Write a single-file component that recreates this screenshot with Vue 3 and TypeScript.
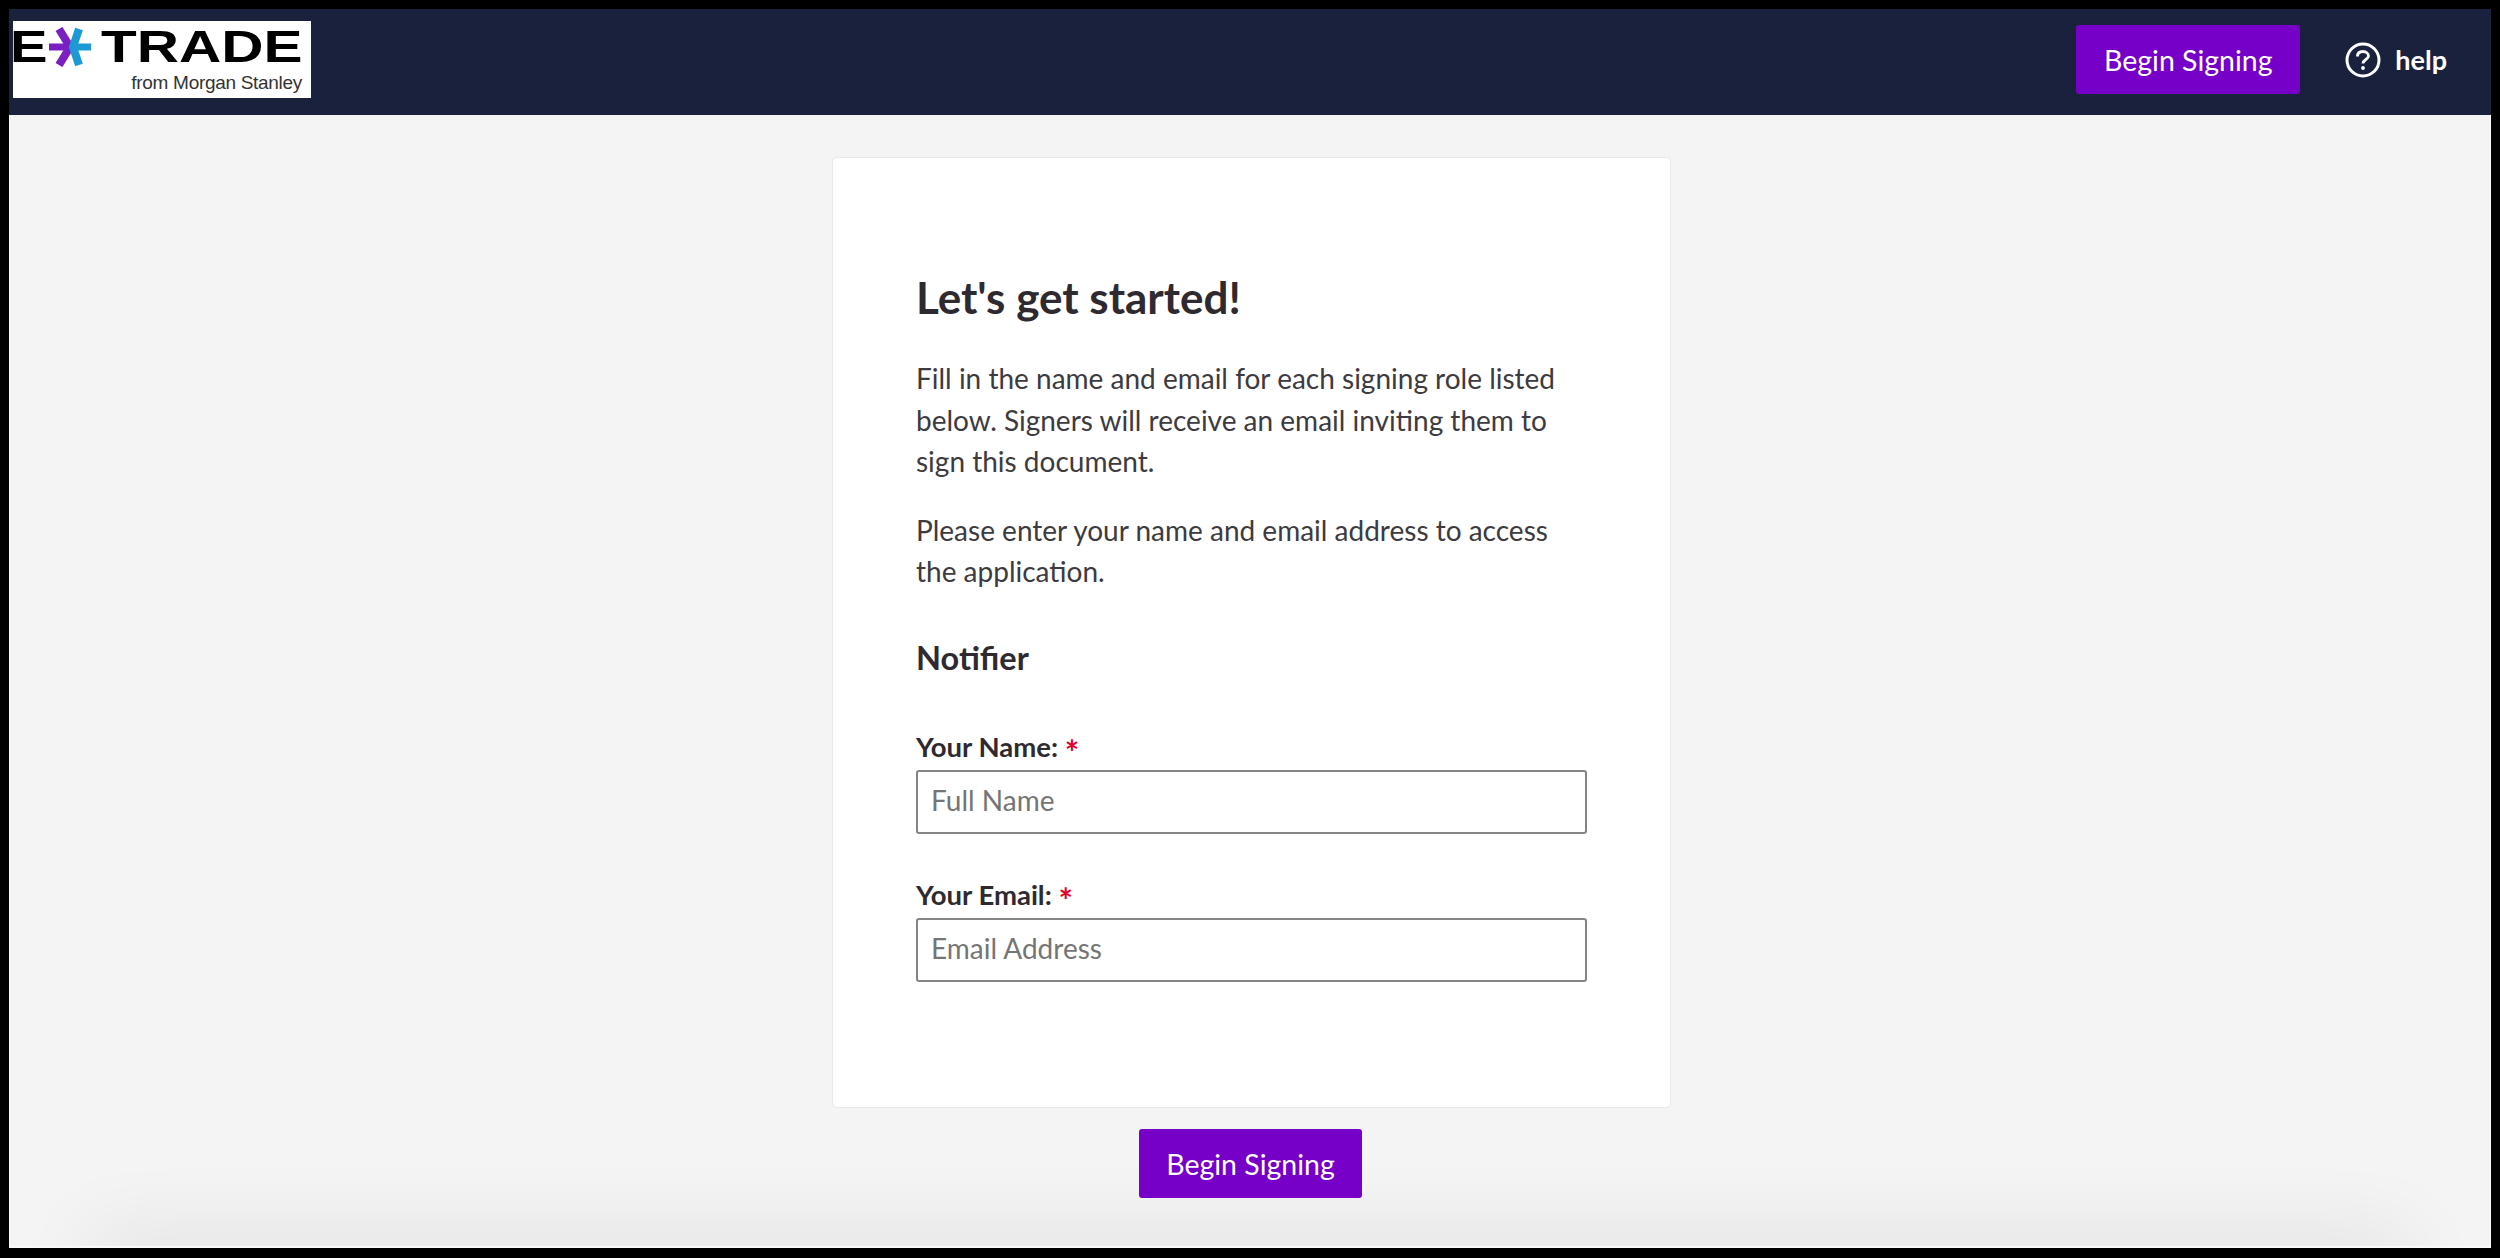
<template>
  <div class="frame">
    <div class="screen">
      <header class="topbar">
        <div class="logo">
          <div class="logo__mark">
            <span class="logo__e">E</span>
            <svg class="logo__star" viewBox="0 0 44 40" width="44" height="40" aria-hidden="true">
              <path d="M11 2 L22 20 L11 38" fill="none" stroke="#7a1fc2" stroke-width="8" />
              <path d="M1 20 H22" fill="none" stroke="#7a1fc2" stroke-width="7" />
              <path d="M31 2 L25 20 L31 38" fill="none" stroke="#1d9ad6" stroke-width="8" />
              <path d="M25 20 H43" fill="none" stroke="#1d9ad6" stroke-width="7" />
            </svg>
            <span class="logo__trade">TRADE</span>
          </div>
          <div class="logo__sub">from Morgan Stanley</div>
        </div>
        <div class="topbar__actions">
          <button type="button" class="btn">Begin Signing</button>
          <a class="help">
            <svg viewBox="0 0 36 36" width="36" height="36" aria-hidden="true">
              <circle cx="18" cy="18" r="16" fill="none" stroke="#fff" stroke-width="3" />
              <path d="M12.5 14.5 C12.5 11 15 9.5 18 9.5 C21 9.5 23.5 11.3 23.5 14 C23.5 17.5 18 17.5 18 21.5" fill="none" stroke="#fff" stroke-width="2.8" />
              <circle cx="18" cy="26" r="1.9" fill="#fff" />
            </svg>
            <span>help</span>
          </a>
        </div>
      </header>

      <main class="content">
        <form class="card" @submit.prevent>
          <h1 class="card__title">Let's get started!</h1>
          <p class="card__text">
            Fill in the name and email for each signing role listed below. Signers will receive an email inviting them to sign this document.
          </p>
          <p class="card__text">Please enter your name and email address to access the application.</p>
          <h2 class="card__role">Notifier</h2>
          <div v-for="field in fields" :key="field.id" class="field">
            <label class="field__label" :for="field.id">{{ field.label }} <span class="field__req">*</span></label>
            <input :id="field.id" class="field__input" type="text" :placeholder="field.placeholder" />
          </div>
        </form>
        <button type="button" class="btn btn--bottom">Begin Signing</button>
      </main>
    </div>
  </div>
</template>

<script setup lang="ts">
const fields = [
  { id: 'name', label: 'Your Name:', placeholder: 'Full Name' },
  { id: 'email', label: 'Your Email:', placeholder: 'Email Address' },
]
</script>

<style>
html,
body {
  margin: 0;
  background: #000;
}
</style>

<style scoped>
.frame {
  box-sizing: border-box;
  height: 1258px;
  padding: 9px 9px 10px 9px;
  background: #000;
  font-family: Lato, "Open Sans", sans-serif;
}

.screen {
  display: flex;
  flex-direction: column;
  height: 100%;
}

.topbar {
  flex: none;
  box-sizing: border-box;
  height: 106px;
  padding: 12px 44px 0 4px;
  display: flex;
  justify-content: space-between;
  align-items: flex-start;
  background: #1a213d;
}

.logo {
  box-sizing: border-box;
  width: 298px;
  height: 77px;
  background: #fff;
  color: #000;
}

.logo__mark {
  display: flex;
  align-items: center;
  height: 46px;
  margin-top: 3px;
  font-family: "Liberation Sans", Arial, sans-serif;
  font-weight: 700;
  font-size: 45px;
  line-height: 46px;
}

.logo__e {
  width: 37px;
  margin-left: -3px;
  transform: scaleX(1.25);
  transform-origin: left center;
}

.logo__star {
  flex: none;
  margin-left: 1px;
}

.logo__trade {
  margin-left: 9px;
  transform: scaleX(1.3);
  transform-origin: left center;
}

.logo__sub {
  padding-right: 9px;
  margin-top: 2px;
  text-align: right;
  font-family: "Liberation Sans", Arial, sans-serif;
  font-size: 19px;
  line-height: 22px;
  letter-spacing: -0.3px;
  color: #333;
}

.topbar__actions {
  display: flex;
  align-items: center;
  gap: 45px;
  margin-top: 4px;
}

.btn {
  position: relative;
  z-index: 1;
  box-sizing: border-box;
  width: 224px;
  height: 69px;
  padding: 0;
  border: none;
  border-radius: 3px;
  background: #7600c8;
  color: #fff;
  font-family: Lato, "Open Sans", sans-serif;
  font-size: 28.5px;
  cursor: pointer;
}

.btn--bottom {
  width: 223px;
  margin-left: 1px;
}

.help {
  display: flex;
  align-items: center;
  gap: 14px;
  color: #fff;
  font-size: 27px;
  font-weight: 700;
}

.content {
  position: relative;
  overflow: hidden;
  flex: 1;
  display: flex;
  flex-direction: column;
  align-items: center;
  padding-top: 42px;
  border: solid #fafafa;
  border-width: 0 1px 2px;
  background: #f4f4f4;
}

/* soft shadow rising from the bottom edge */
.content::after {
  content: '';
  position: absolute;
  left: 80px;
  right: 80px;
  bottom: -20px;
  height: 20px;
  box-shadow: 0 0 80px rgba(0, 0, 0, 0.2);
  pointer-events: none;
}

.card {
  box-sizing: border-box;
  width: 839px;
  height: 951px;
  margin: 0 0 21px 3px;
  padding: 113px 83px 0;
  border: 1px solid #e8e8e8;
  border-radius: 5px;
  background: #fff;
  color: #2e2a30;
}

.card__title {
  margin: 0 0 35px;
  font-size: 44px;
  line-height: 52px;
  font-weight: 700;
}

.card__text {
  margin: 0 0 27px;
  font-size: 28px;
  line-height: 41.5px;
  color: #3d3a40;
}

.card__role {
  margin: 45px 0 49px;
  font-size: 32.5px;
  line-height: 40px;
  font-weight: 700;
}

.field {
  margin-bottom: 41px;
}

.field__label {
  display: block;
  height: 43px;
  font-size: 27.5px;
  line-height: 40px;
  font-weight: 700;
}

.field__req {
  color: #e4002b;
  font-size: 34px;
  line-height: 30px;
  vertical-align: -8px;
}

.field__input {
  display: block;
  box-sizing: border-box;
  width: 671px;
  height: 64px;
  padding: 0 13px 3px;
  border: 2px solid #858585;
  border-radius: 3px;
  background: #fff;
  font-family: Lato, "Open Sans", sans-serif;
  font-size: 28px;
  outline: none;
}

.field__input::placeholder {
  color: #757575;
  opacity: 1;
}
</style>
